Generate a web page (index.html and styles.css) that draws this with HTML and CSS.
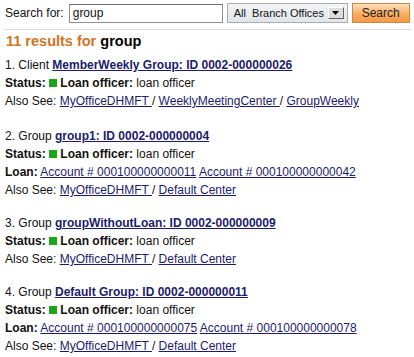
FILE: index.html
```html
<!DOCTYPE html>
<html>
<head>
<meta charset="utf-8">
<link rel="stylesheet" href="styles.css">
</head>
<body>
<div class="page">
  <form class="search-bar">
    <label class="search-label">Search for:</label>
    <div class="search-input">group</div>
    <div class="select">
      <span class="select-text">All&nbsp; Branch Offices</span>
      <span class="select-btn"><svg width="7" height="4" viewBox="0 0 7 4"><path d="M0 0H7L3.5 4Z" fill="#000"/></svg></span>
    </div>
    <div class="search-btn">Search</div>
  </form>
  <div class="rule"></div>
  <h2 class="results-title"><span class="count">11 results for</span> group</h2>

  <div class="result result-first">
    <div class="line">1. Client <a class="title-link" href="#">MemberWeekly Group: ID 0002-000000026</a></div>
    <div class="line"><b>Status:</b> <span class="status-box"></span> <b>Loan officer:</b> loan officer</div>
    <div class="line">Also See: <a href="#">MyOfficeDHMFT </a> / <a href="#">WeeklyMeetingCenter </a> / <a href="#">GroupWeekly</a></div>
  </div>

  <div class="result">
    <div class="line">2. Group <a class="title-link" href="#">group1: ID 0002-000000004</a></div>
    <div class="line"><b>Status:</b> <span class="status-box"></span> <b>Loan officer:</b> loan officer</div>
    <div class="line"><b>Loan:</b> <a href="#">Account # 000100000000011</a> <a href="#">Account # 000100000000042</a></div>
    <div class="line">Also See: <a href="#">MyOfficeDHMFT </a> / <a href="#">Default Center</a></div>
  </div>

  <div class="result">
    <div class="line">3. Group <a class="title-link" href="#">groupWithoutLoan: ID 0002-000000009</a></div>
    <div class="line"><b>Status:</b> <span class="status-box"></span> <b>Loan officer:</b> loan officer</div>
    <div class="line">Also See: <a href="#">MyOfficeDHMFT </a> / <a href="#">Default Center</a></div>
  </div>

  <div class="result">
    <div class="line">4. Group <a class="title-link" href="#">Default Group: ID 0002-000000011</a></div>
    <div class="line"><b>Status:</b> <span class="status-box"></span> <b>Loan officer:</b> loan officer</div>
    <div class="line"><b>Loan:</b> <a href="#">Account # 000100000000075</a> <a href="#">Account # 000100000000078</a></div>
    <div class="line">Also See: <a href="#">MyOfficeDHMFT </a> / <a href="#">Default Center</a></div>
  </div>
</div>
</body>
</html>
```

FILE: styles.css
```css
html, body {
  margin: 0;
  padding: 0;
  background: #fff;
}
body {
  font-family: "Liberation Sans", Arial, sans-serif;
  font-size: 12px;
  color: #111;
}
.page {
  padding: 3px 3px 0 5px;
}
.search-bar {
  display: flex;
  align-items: center;
  margin: 0;
  height: 20px;
}
.search-label {
  flex: none;
  white-space: nowrap;
  font-size: 12px;
  margin-right: 5px;
}
.search-input {
  flex: none;
  box-sizing: border-box;
  width: 154px;
  height: 19px;
  border: 1px solid #8f8f8f;
  border-top-color: #707070;
  padding: 0 3px;
  font-size: 12px;
  line-height: 17px;
  background: #fff;
}
.select {
  flex: none;
  box-sizing: border-box;
  margin-left: 4px;
  width: 121px;
  height: 20px;
  border: 1px solid #a9acb0;
  background: linear-gradient(#f2f4f6, #e1e5e9);
  display: flex;
  align-items: center;
  padding-left: 6px;
}
.select-text {
  font-size: 11px;
  flex: 1;
  white-space: nowrap;
}
.select-btn {
  box-sizing: border-box;
  width: 16px;
  height: 12px;
  margin-right: 3px;
  background: #dcdcdc;
  border: 1px solid;
  border-color: #fff #606060 #606060 #fff;
  display: flex;
  align-items: center;
  justify-content: center;
}
.search-btn {
  flex: none;
  box-sizing: border-box;
  margin-left: 4px;
  width: 58px;
  height: 20px;
  border: 1px solid #c88a4a;
  background: linear-gradient(#fde0bc, #f9a95c 60%, #f59a46);
  font-size: 12px;
  text-align: center;
  line-height: 18px;
  color: #222;
}
.rule {
  height: 1px;
  background: #d8dbe0;
  margin: 6px 0 0 -2px;
}
.results-title {
  margin: 2px 0 6px 1px;
  font-size: 14.5px;
  font-weight: bold;
  line-height: 18px;
  color: #000;
}
.count {
  color: #d2731f;
}
.result {
  margin-bottom: 15px;
}
.result-first {
  margin-bottom: 17px;
}
.line {
  line-height: 18px;
  white-space: nowrap;
}
a {
  color: #1c1c6c;
  text-decoration: underline;
}
.title-link {
  font-weight: bold;
}
.status-box {
  display: inline-block;
  width: 8px;
  height: 8px;
  background: #1aa51a;
  vertical-align: 0;
}
```
